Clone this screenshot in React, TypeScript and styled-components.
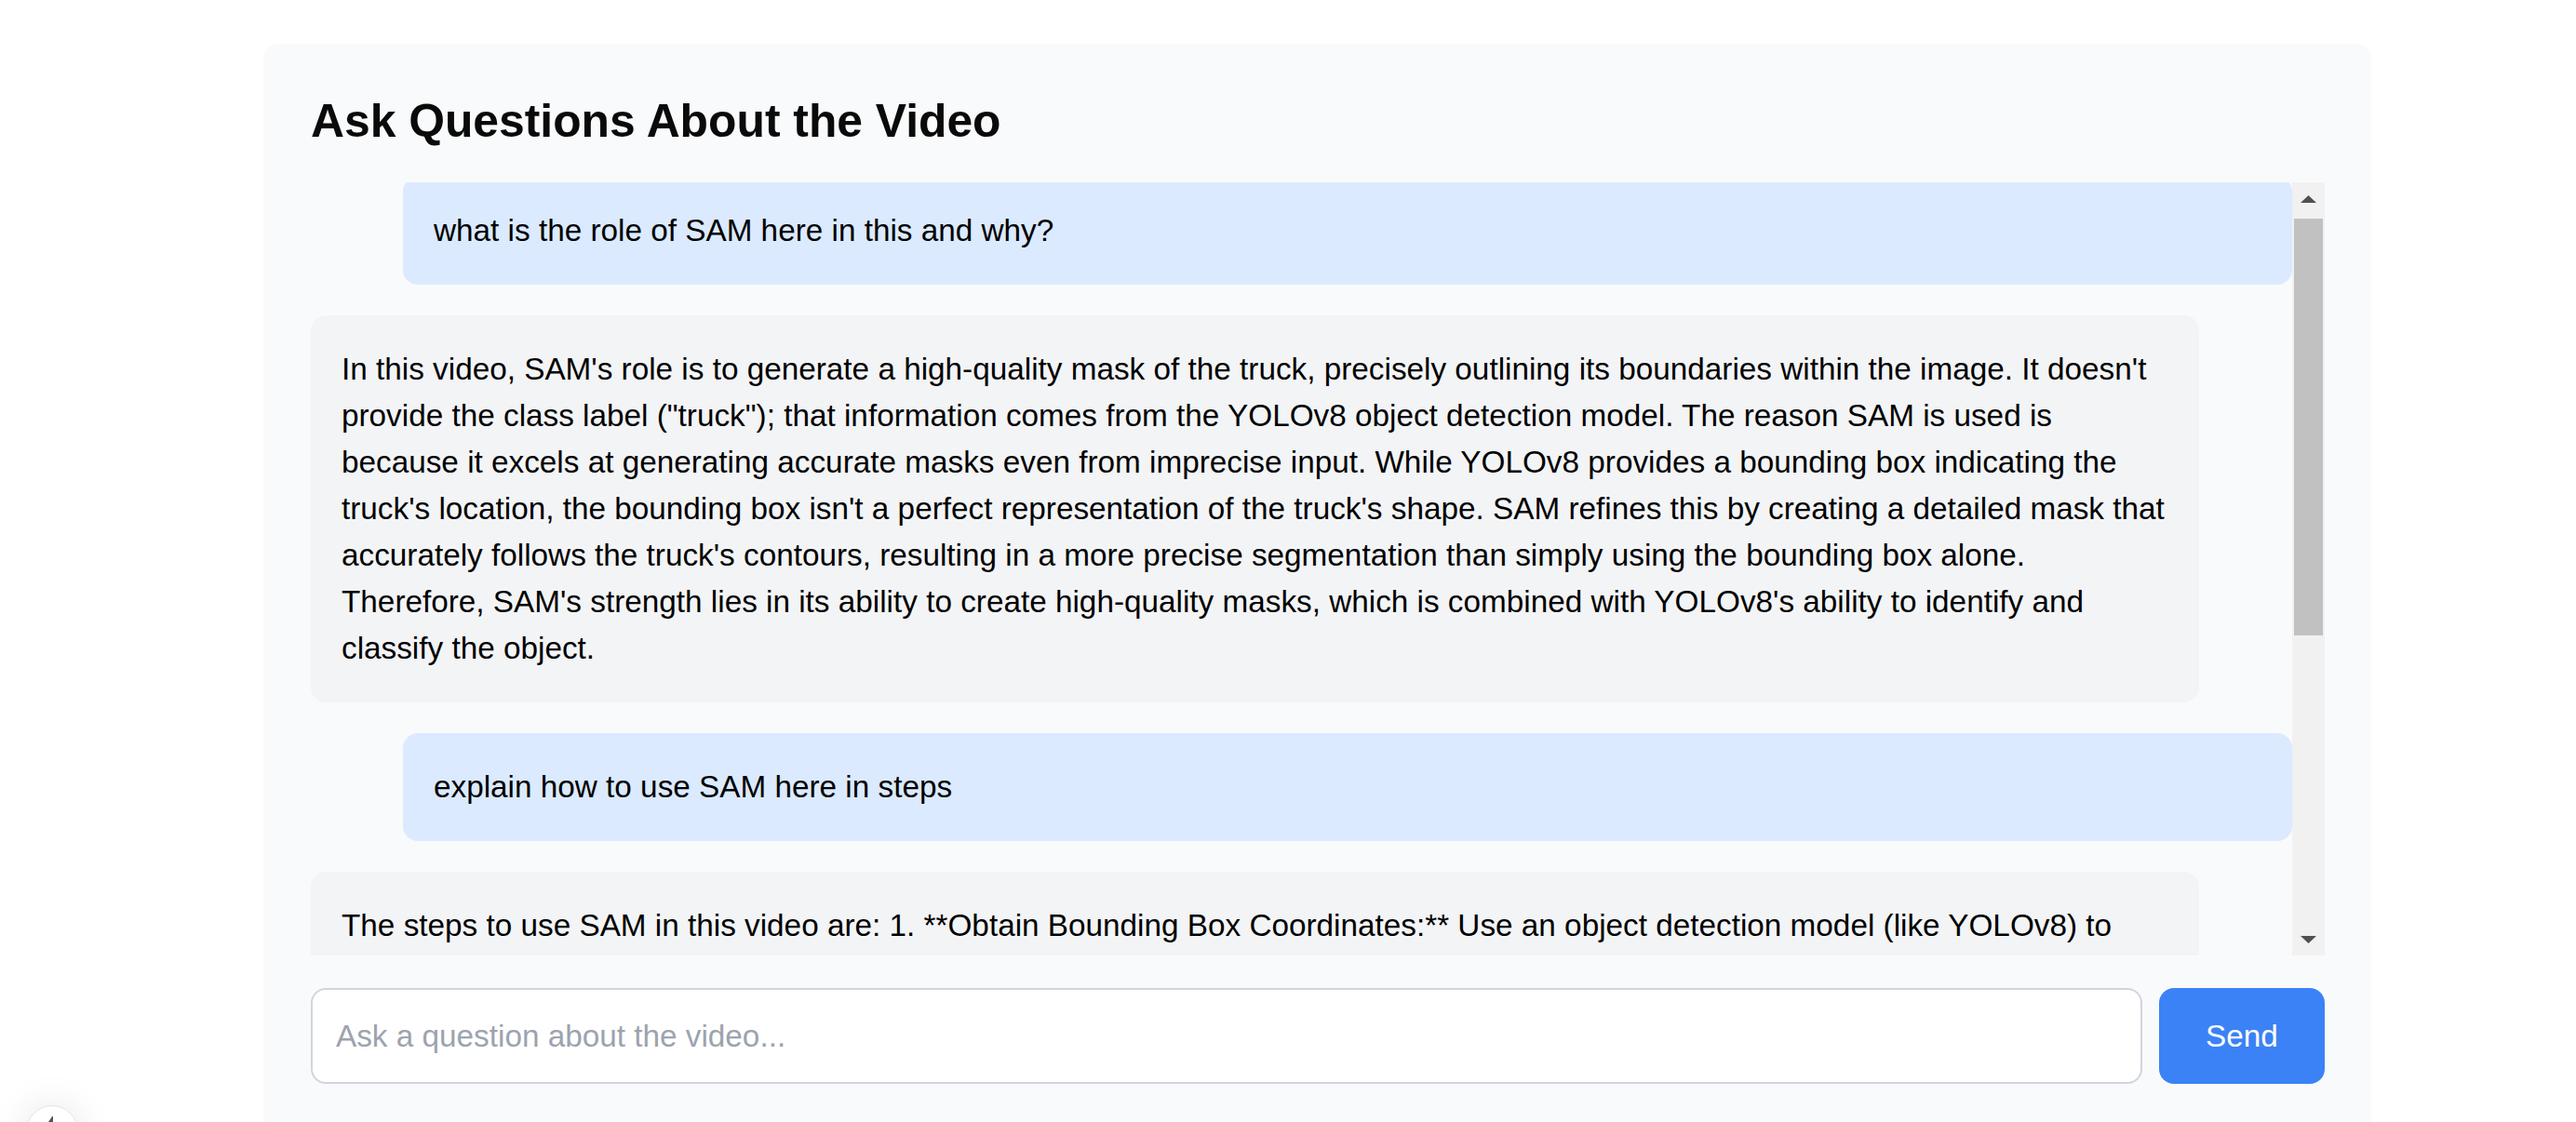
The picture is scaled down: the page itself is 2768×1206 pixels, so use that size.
import { useLayoutEffect, useRef } from "react";
import styled, { createGlobalStyle } from "styled-components";

type Role = "user" | "assistant";

const messages: { role: Role; text: string }[] = [
  { role: "user", text: "what is the role of SAM here in this and why?" },
  {
    role: "assistant",
    text: "In this video, SAM's role is to generate a high-quality mask of the truck, precisely outlining its boundaries within the image. It doesn't provide the class label (\"truck\"); that information comes from the YOLOv8 object detection model. The reason SAM is used is because it excels at generating accurate masks even from imprecise input. While YOLOv8 provides a bounding box indicating the truck's location, the bounding box isn't a perfect representation of the truck's shape. SAM refines this by creating a detailed mask that accurately follows the truck's contours, resulting in a more precise segmentation than simply using the bounding box alone. Therefore, SAM's strength lies in its ability to create high-quality masks, which is combined with YOLOv8's ability to identify and classify the object.",
  },
  { role: "user", text: "explain how to use SAM here in steps" },
  {
    role: "assistant",
    text: "The steps to use SAM in this video are: 1. **Obtain Bounding Box Coordinates:** Use an object detection model (like YOLOv8) to detect the truck in the image and obtain its bounding box coordinates (x_min, y_min, x_max, y_max). 2. **Load the SAM Model:** Load the pre-trained Segment Anything Model (SAM) checkpoint, for example the ViT-H variant, and initialize the SAM predictor. 3. **Set the Image:** Pass the video frame (or image) to the SAM predictor so that it can compute the image embeddings. 4. **Provide the Bounding Box as a Prompt:** Feed the bounding box coordinates from YOLOv8 into SAM as a box prompt. 5. **Generate the Mask:** SAM outputs a high-quality mask for the object inside the bounding box. 6. **Visualize the Result:** Overlay the mask on the original frame, along with the class label (\"truck\") from YOLOv8.",
  },
];

const App = () => {
  const listRef = useRef<HTMLDivElement>(null);

  useLayoutEffect(() => {
    if (listRef.current) listRef.current.scrollTop = 6;
  }, []);

  return (
    <Page>
      <GlobalStyle />
      <Card>
        <Title>Ask Questions About the Video</Title>

        <ChatFrame>
          <ChatList ref={listRef}>
            {messages.map((m, i) => (
              <Bubble key={i} $role={m.role}>
                {m.text}
              </Bubble>
            ))}
          </ChatList>

          <ScrollRail>
            <ArrowButton $dir="up">
              <svg width="17" height="8" viewBox="0 0 17 8">
                <path d="M0 8 L8.5 0 L17 8 Z" fill="#505050" />
              </svg>
            </ArrowButton>
            <Track>
              <Thumb />
            </Track>
            <ArrowButton $dir="down">
              <svg width="17" height="8" viewBox="0 0 17 8">
                <path d="M0 0 L17 0 L8.5 8 Z" fill="#505050" />
              </svg>
            </ArrowButton>
          </ScrollRail>
        </ChatFrame>

        <InputRow>
          <QuestionInput placeholder="Ask a question about the video..." />
          <SendButton>Send</SendButton>
        </InputRow>
      </Card>

      <FloatButton>
        <svg width="20" height="20" viewBox="0 0 20 20">
          <path d="M10 3 L6 9 L9 9 L9 17 L11 17 L11 3 Z" fill="#555" />
        </svg>
      </FloatButton>
    </Page>
  );
};

export default App;

const GlobalStyle = createGlobalStyle`
  html, body {
    margin: 0;
    background: #ffffff;
  }
  body {
    font-family: "Liberation Sans", Arial, sans-serif;
    overflow: hidden;
  }
`;

const Page = styled.div`
  padding: 47px 0 0 283px;
  min-height: 1206px;
  box-sizing: border-box;
`;

const Card = styled.div`
  width: 2265px;
  box-sizing: border-box;
  padding: 50px 50px 50px 51px;
  background: #f9fafb;
  border-radius: 16px;
`;

const Title = styled.h2`
  margin: 0 0 33px;
  font-size: 49.8px;
  line-height: 66px;
  font-weight: 700;
  color: #0a0a0a;
`;

const ChatFrame = styled.div`
  display: flex;
  height: 831px;
`;

const ChatList = styled.div`
  flex: 1;
  min-width: 0;
  overflow-y: scroll;
  scrollbar-width: none;
  display: flex;
  flex-direction: column;
  gap: 33px;

  &::-webkit-scrollbar {
    display: none;
  }
`;

const ScrollRail = styled.div`
  width: 35px;
  flex-shrink: 0;
  background: #f1f1f1;
  display: flex;
  flex-direction: column;
`;

const ArrowButton = styled.div<{ $dir: "up" | "down" }>`
  height: 39px;
  display: flex;
  justify-content: center;
  align-items: ${(p) => (p.$dir === "up" ? "flex-start" : "flex-end")};
  padding: ${(p) => (p.$dir === "up" ? "14px 0 0" : "0 0 13px")};
  box-sizing: border-box;
`;

const Track = styled.div`
  flex: 1;
  padding: 0 2px;
`;

const Thumb = styled.div`
  height: 448px;
  background: #c1c1c1;
`;

const Bubble = styled.div<{ $role: Role }>`
  flex-shrink: 0;
  padding: 33px;
  border-radius: 16px;
  font-size: 33.3px;
  line-height: 50px;
  color: #000000;
  background: ${(p) => (p.$role === "user" ? "#dbeafe" : "#f3f4f6")};
  margin-left: ${(p) => (p.$role === "user" ? "99px" : "0")};
  margin-right: ${(p) => (p.$role === "user" ? "0" : "100px")};
`;

const InputRow = styled.div`
  display: flex;
  gap: 18px;
  margin-top: 35px;
`;

const QuestionInput = styled.input`
  flex: 1;
  height: 103px;
  box-sizing: border-box;
  padding: 0 25px;
  border: 2px solid #d1d5db;
  border-radius: 16px;
  background: #ffffff;
  font-family: "Liberation Sans", Arial, sans-serif;
  font-size: 33.3px;
  color: #111111;
  outline: none;

  &::placeholder {
    color: #9ca3af;
  }
`;

const SendButton = styled.button`
  width: 178px;
  height: 103px;
  border: none;
  border-radius: 16px;
  background: #3b82f6;
  color: #ffffff;
  font-family: "Liberation Sans", Arial, sans-serif;
  font-size: 33.3px;
  cursor: pointer;
`;

const FloatButton = styled.div`
  position: fixed;
  left: 28px;
  top: 1188px;
  width: 56px;
  height: 56px;
  border-radius: 50%;
  background: #ffffff;
  border: 1px solid #e4e4e4;
  box-shadow: 0 0 40px rgba(0, 0, 0, 0.1);
  display: flex;
  align-items: flex-start;
  justify-content: center;
  padding-top: 8px;
  box-sizing: border-box;
`;
